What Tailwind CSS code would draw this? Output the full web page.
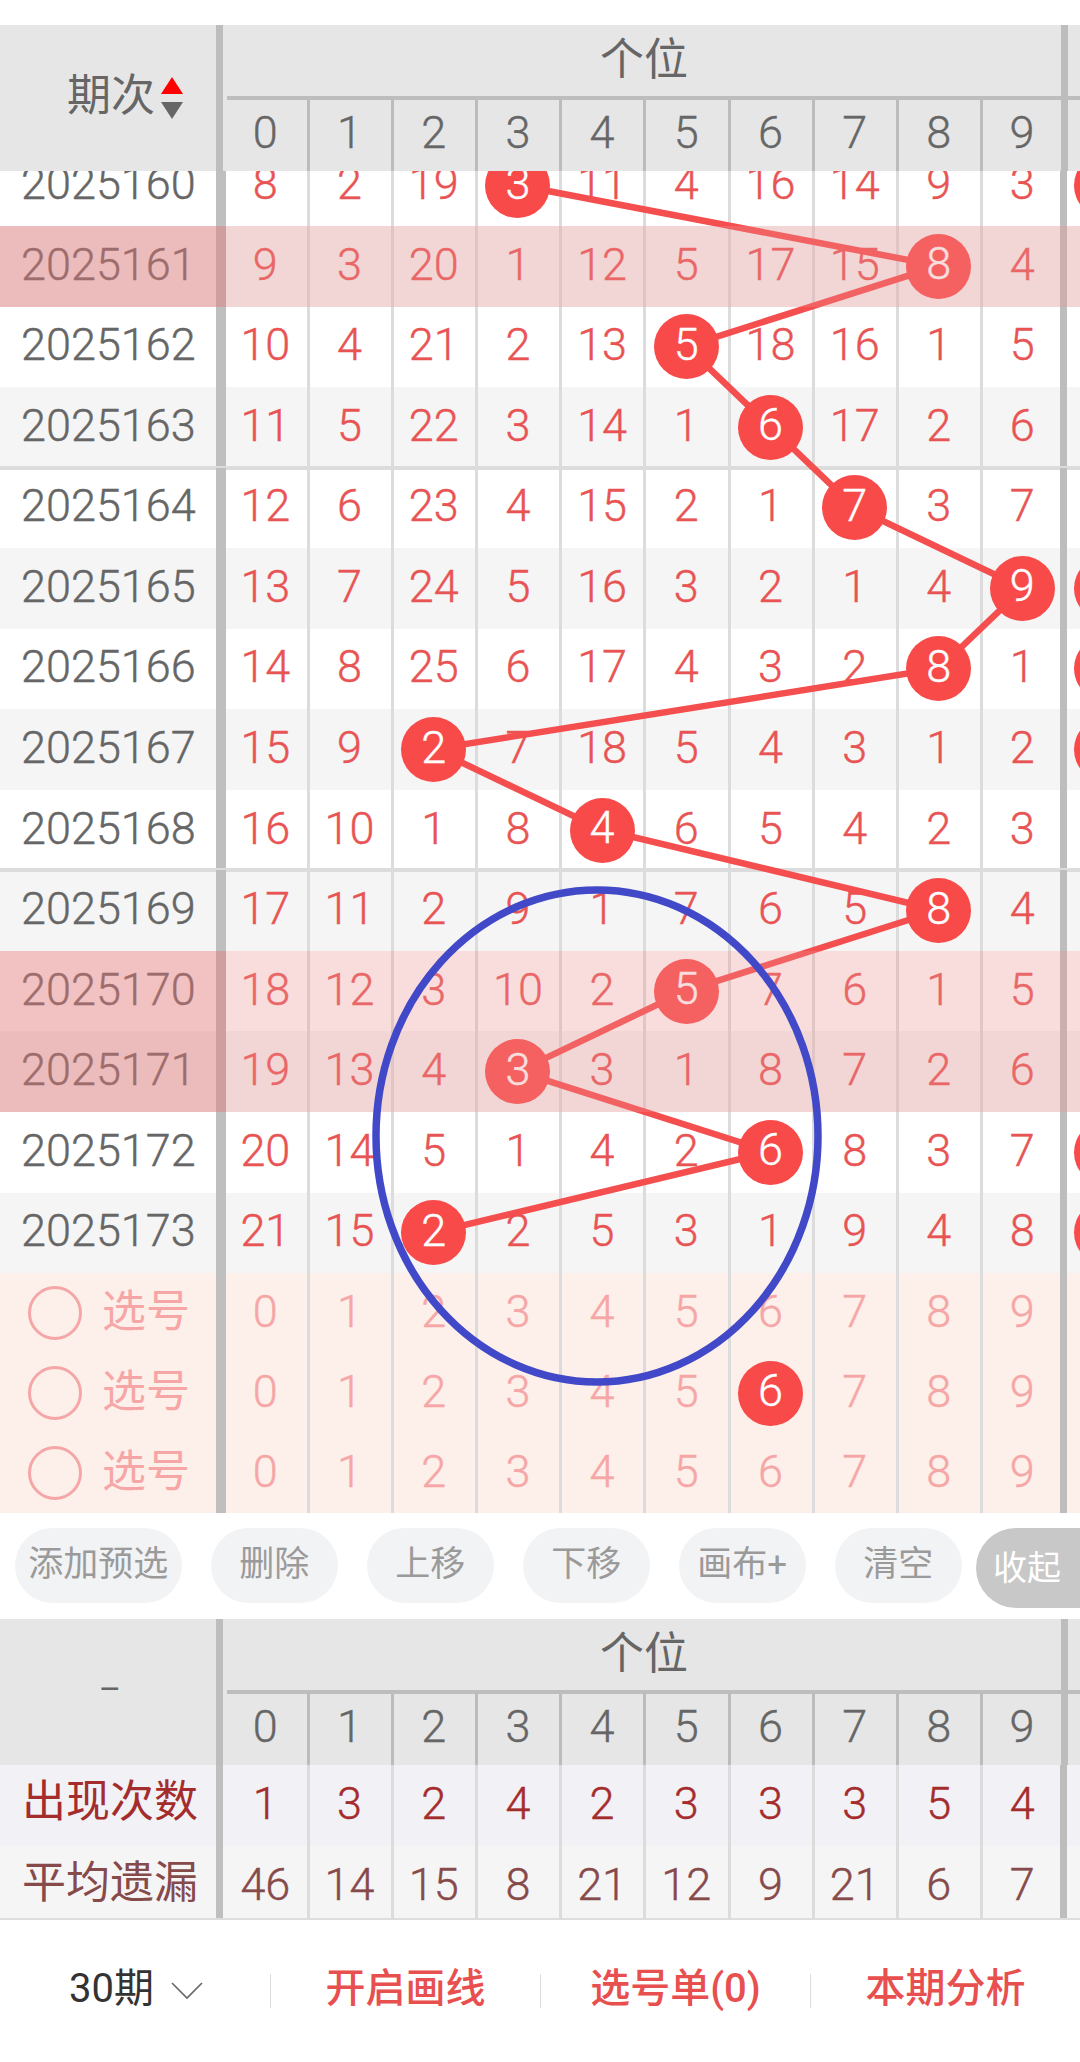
<!DOCTYPE html>
<html lang="zh-CN">
<head>
    <meta charset="UTF-8">
    <meta name="viewport" content="width=device-width, initial-scale=1.0">
    <title>个位走势</title>
    <script src="https://cdn.jsdelivr.net/npm/@tailwindcss/browser@4"></script>
</head>
<body class="bg-white font-[Roboto,'Noto_Sans_CJK_SC',sans-serif] leading-none">
    <div class="w-[1080px] h-[2062px] overflow-hidden flex flex-col">
        <div class="h-[25px] shrink-0"></div>

        <div id="topHeader"></div>

        <!-- trend table, scrolled so that the first row sits under the header -->
        <div class="relative h-[1342px] shrink-0 overflow-hidden">
            <div id="rows" class="relative -mt-[25.6px]">
                <svg id="trend" class="absolute left-0 top-0 z-10" width="1080" height="1130">
                    <polyline id="trendLine" fill="none" stroke="#f54e4e" stroke-width="6.5"></polyline>
                </svg>
            </div>
            <svg class="absolute left-0 top-0 z-40" width="1080" height="1342">
                <ellipse cx="597" cy="965" rx="221" ry="246" fill="none" stroke="#4149c8" stroke-width="7.5"></ellipse>
            </svg>
        </div>

        <!-- action buttons -->
        <div class="h-[106px] shrink-0 flex items-start pt-[15px] pl-[15px] gap-[29.5px] text-[35px] text-[#9a9a9a]">
            <button class="w-[166.5px] h-[75px] shrink-0 rounded-full bg-[#f2f3f5] pb-[2px]">添加预选</button>
            <button class="w-[126.5px] h-[75px] shrink-0 rounded-full bg-[#f2f3f5] pb-[2px]">删除</button>
            <button class="w-[126.5px] h-[75px] shrink-0 rounded-full bg-[#f2f3f5] pb-[2px]">上移</button>
            <button class="w-[126.5px] h-[75px] shrink-0 rounded-full bg-[#f2f3f5] pb-[2px]">下移</button>
            <button class="w-[126.5px] h-[75px] shrink-0 rounded-full bg-[#f2f3f5] pb-[2px]">画布+</button>
            <button class="w-[126.5px] h-[75px] shrink-0 rounded-full bg-[#f2f3f5] pb-[2px]">清空</button>
            <button class="w-[120px] h-[80px] shrink-0 -ml-[15px] rounded-l-full bg-[#c8c8c8] text-white text-[34px] text-left pl-[17px]">收起</button>
        </div>

        <div id="bottomHeader"></div>
        <div id="stats"></div>
        <div class="h-[2px] shrink-0 bg-[#dddddd]"></div>

        <!-- bottom bar -->
        <div class="h-[142px] shrink-0 grid grid-cols-[270px_270px_270px_270px] items-center text-[40px] text-[#e85050] font-medium">
            <div class="flex items-center pl-[69px] pb-[4px] h-[34px] text-[#333333] font-normal">
                <span>30期</span>
                <svg class="ml-[17px] mt-[4px]" width="32" height="18" viewBox="0 0 32 18"><path d="M1 1 L16 16 L31 1" fill="none" stroke="#666666" stroke-width="1.6"></path></svg>
            </div>
            <div class="flex items-center justify-center pb-[4px] h-[34px] border-l border-[#dddddd]">开启画线</div>
            <div class="flex items-center justify-center pb-[4px] h-[34px] border-l border-[#dddddd]">选号单(0)</div>
            <div class="flex items-center justify-center pb-[4px] h-[34px] border-l border-[#dddddd]">本期分析</div>
        </div>
    </div>

    <script>
        // balls: column of the hit per issue, rest are omission counts
        const issues = [
            ['2025160', [8, 2, 19, 3, 11, 4, 16, 14, 9, 3], 3, true],
            ['2025161', [9, 3, 20, 1, 12, 5, 17, 15, 8, 4], 8, false],
            ['2025162', [10, 4, 21, 2, 13, 5, 18, 16, 1, 5], 5, false],
            ['2025163', [11, 5, 22, 3, 14, 1, 6, 17, 2, 6], 6, false],
            ['2025164', [12, 6, 23, 4, 15, 2, 1, 7, 3, 7], 7, false],
            ['2025165', [13, 7, 24, 5, 16, 3, 2, 1, 4, 9], 9, true],
            ['2025166', [14, 8, 25, 6, 17, 4, 3, 2, 8, 1], 8, true],
            ['2025167', [15, 9, 2, 7, 18, 5, 4, 3, 1, 2], 2, true],
            ['2025168', [16, 10, 1, 8, 4, 6, 5, 4, 2, 3], 4, false],
            ['2025169', [17, 11, 2, 9, 1, 7, 6, 5, 8, 4], 8, false],
            ['2025170', [18, 12, 3, 10, 2, 5, 7, 6, 1, 5], 5, false],
            ['2025171', [19, 13, 4, 3, 3, 1, 8, 7, 2, 6], 3, false],
            ['2025172', [20, 14, 5, 1, 4, 2, 6, 8, 3, 7], 6, true],
            ['2025173', [21, 15, 2, 2, 5, 3, 1, 9, 4, 8], 2, true]
        ];

        const ROW_H = 80.55;
        const thin = 'relative flex items-center justify-center pr-[4.5px] shadow-[inset_-3px_0_0_#dcdcdc]';
        const last = 'relative flex items-center justify-center pr-[6px] shadow-[inset_-7px_0_0_#bdbdbd]';
        const ball = 'relative z-20 flex items-center justify-center w-[65px] h-[65px] pb-[5px] rounded-full bg-[#f94a4a] text-white';

        function headerHtml(leftHtml) {
            let digits = '';
            for (let i = 0; i < 10; i++) {
                const cls = i < 9
                    ? 'flex items-center justify-center pr-[4.5px] pb-[7px] shadow-[inset_-3px_0_0_#bcbcbc]'
                    : 'flex items-center justify-center pb-[7px]';
                digits += `<div class="${cls}">${i}</div>`;
            }
            return `<div class="flex h-[146px] shrink-0 bg-[#e6e6e6] text-[#666666]">
                <div class="w-[216px] shrink-0 flex items-center">${leftHtml}</div>
                <div class="w-[7px] shrink-0 bg-[#bdbdbd]"></div>
                <div class="w-[838px] shrink-0 flex flex-col">
                    <div class="h-[71px] flex items-center justify-center pb-[1px] pl-[4px] text-[44px]">个位</div>
                    <div class="h-[4px] ml-[4px] bg-[#bdbdbd]"></div>
                    <div class="h-[71px] ml-[2.5px] grid grid-cols-[repeat(9,84.2px)_77.7px] text-[45px] font-light [-webkit-text-stroke:0.4px]">${digits}</div>
                </div>
                <div class="w-[7px] shrink-0 bg-[#bdbdbd]"></div>
                <div class="flex-1 pt-[71px]"><div class="h-[4px] bg-[#bdbdbd]"></div></div>
            </div>`;
        }

        document.getElementById('topHeader').innerHTML = headerHtml(`
            <span class="ml-[67px] text-[44px] pb-[4px]">期次</span>
            <span class="ml-[6px] flex flex-col gap-[8px]">
                <span class="w-0 h-0 border-x-[11px] border-x-transparent border-b-[17px] border-b-[#ff0000]"></span>
                <span class="w-0 h-0 border-x-[11px] border-x-transparent border-t-[17px] border-t-[#666666]"></span>
            </span>`);
        document.getElementById('bottomHeader').innerHTML = headerHtml(
            '<span class="w-full text-center text-[34px] pl-[4px] pb-[6px]">–</span>');

        // issue rows
        const rowsEl = document.getElementById('rows');
        let html = '';
        issues.forEach((row, r) => {
            const [name, nums, hit, nextBall] = row;
            const highlighted = name === '2025161' || name === '2025170' || name === '2025171';
            const rowBg = r % 2 === 1 ? 'bg-[#f5f5f5]' : 'bg-white';
            const groupLine = (r === 4 || r === 9) ? 'shadow-[0_-2px_0_#dcdcdc,inset_0_2px_0_#dcdcdc]' : '';
            let cells = `<div class="flex items-center pl-[21px] pb-[4px] border-r-[10px] border-[#bfbfbf] text-[#666666]">${name}</div>`;
            nums.forEach((n, i) => {
                const cls = i < 9 ? thin : last;
                if (i === hit) {
                    cells += `<div class="${cls}"><span class="${ball}">${n}</span></div>`;
                } else {
                    cells += `<div class="${cls} pb-[4px]">${n}</div>`;
                }
            });
            cells += nextBall
                ? `<div class="flex items-center justify-center pr-[5px]"><span class="${ball}"></span></div>`
                : '<div></div>';
            let overlay = '';
            if (highlighted) {
                overlay = `<div class="absolute inset-0 z-30 bg-[rgba(236,145,145,0.31)]"></div>
                           <div class="absolute left-0 top-0 bottom-0 w-[226px] z-30 bg-[rgba(214,86,86,0.2)]"></div>`;
            }
            html += `<div class="relative grid grid-cols-[225.5px_repeat(9,84.2px)_84.2px_84.2px] h-[80.55px] text-[45px] font-light [-webkit-text-stroke:0.4px] text-[#e85454] ${rowBg} ${groupLine}">${cells}${overlay}</div>`;
        });

        // picking rows, the second one has a number selected
        for (let p = 0; p < 3; p++) {
            let cells = `<div class="flex items-center border-r-[10px] border-[#bfbfbf] font-normal [-webkit-text-stroke:0px]">
                <span class="ml-[28px] w-[54px] h-[54px] rounded-full border-[3px] border-[#f6a6a6]"></span>
                <span class="ml-[20px] pb-[2px] text-[44px]">选号</span>
            </div>`;
            for (let i = 0; i < 10; i++) {
                const cls = i < 9 ? thin : last;
                if (p === 1 && i === 6) {
                    cells += `<div class="${cls}"><span class="${ball}">${i}</span></div>`;
                } else {
                    cells += `<div class="${cls} pb-[4px]">${i}</div>`;
                }
            }
            html += `<div class="relative grid grid-cols-[225.5px_repeat(9,84.2px)_84.2px_84.2px] h-[80px] text-[45px] font-light [-webkit-text-stroke:0.4px] text-[#f6a6a6] bg-[#fdf0ea]">${cells}<div></div></div>`;
        }
        rowsEl.insertAdjacentHTML('beforeend', html);

        // broken line through the hits
        const points = issues.map((row, r) => {
            const x = 265.35 + 84.2 * row[2];
            const y = ROW_H / 2 + ROW_H * r;
            return `${x},${y}`;
        });
        document.getElementById('trendLine').setAttribute('points', points.join(' '));

        // stats under the table
        const stats = [
            ['出现次数', [1, 3, 2, 4, 2, 3, 3, 3, 5, 4], 'h-[81px] bg-[#f2f1f6] text-[#a52c2c]'],
            ['平均遗漏', [46, 14, 15, 8, 21, 12, 9, 21, 6, 7], 'h-[72px] bg-[#f6f5f6] text-[#864a4a]']
        ];
        let statHtml = '';
        stats.forEach(([label, nums, rowCls]) => {
            let cells = `<div class="flex items-start pt-[15px] pl-[22px] mr-[2.5px] border-r-[7px] border-[#bfbfbf] text-[44px]">${label}</div>`;
            nums.forEach((n, i) => {
                const cls = i < 9
                    ? 'flex items-start justify-center pt-[16px] pr-[4.5px] font-light [-webkit-text-stroke:0.4px] shadow-[inset_-3px_0_0_#dcdcdc]'
                    : 'flex items-start justify-center pt-[16px] pr-[6px] font-light [-webkit-text-stroke:0.4px] shadow-[inset_-7px_0_0_#bdbdbd]';
                cells += `<div class="${cls}">${n}</div>`;
            });
            statHtml += `<div class="grid grid-cols-[225.5px_repeat(9,84.2px)_84.2px_12.5px] text-[45px] ${rowCls}">${cells}<div></div></div>`;
        });
        document.getElementById('stats').innerHTML = statHtml;
    </script>
</body>
</html>
